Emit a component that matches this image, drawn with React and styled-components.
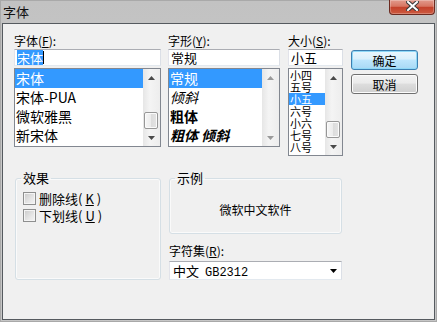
import React from 'react';
import styled, { createGlobalStyle } from 'styled-components';

const GlobalStyle = createGlobalStyle`
  html, body {
    margin: 0;
    padding: 0;
    background: #ffffff;
  }
  body {
    font-family: "Noto Sans CJK SC", "Liberation Sans", sans-serif;
    font-size: 12px;
    color: #000;
  }
`;

const Window = styled.div`
  width: 437px;
  height: 322px;
  box-sizing: border-box;
  display: flex;
  flex-direction: column;
  padding: 0 2px 2px 2px;
  background: linear-gradient(180deg, #c2c2c2 0%, #cbcbcb 60%, #c6c6c6 100%);
  box-shadow: inset 0 0 0 1px #a9a9a9;
`;

const TitleBar = styled.div`
  height: 23px;
  flex: none;
  display: flex;
  align-items: flex-start;
`;

const Title = styled.div`
  padding: 4px 0 0 1px;
  font-size: 13px;
  line-height: 15px;
  color: #111;
`;

const CloseButton = styled.div`
  margin-left: auto;
  width: 46px;
  height: 15px;
  box-sizing: border-box;
  border: 1px solid #6b2a20;
  border-top: none;
  border-radius: 0 0 4px 4px;
  display: flex;
  align-items: flex-start;
  justify-content: center;
  padding-top: 1px;
  background: linear-gradient(180deg, #e29a8c 0%, #d77562 45%, #c4412b 52%, #cc5a40 100%);
  box-shadow: inset 0 0 0 1px rgba(255, 255, 255, 0.25);
`;

const Body = styled.div`
  flex: 1;
  border: 1px solid #555a5f;
  background: #f0f0f0;
  padding: 9px 0 0 11px;
  display: flex;
  flex-direction: column;
`;

const TopRow = styled.div`
  display: flex;
  align-items: flex-start;
`;

const Column = styled.div`
  width: ${(p) => p.$width}px;
  margin-right: ${(p) => p.$gap}px;
  display: flex;
  flex-direction: column;
  flex: none;
`;

const Label = styled.div`
  height: 16px;
  line-height: 16px;
  font-size: 12px;
  white-space: nowrap;
`;

const TextBox = styled.div`
  height: 17px;
  box-sizing: border-box;
  border: 1px solid;
  border-color: #abadb3 #dbdfe6 #e3e9ef #e2e3ea;
  background: #fff;
  margin-bottom: 2px;
  padding-left: 2px;
  font-size: 13px;
  line-height: 15px;
  white-space: nowrap;
  overflow: hidden;
  display: flex;
  align-items: center;
`;

const Highlight = styled.span`
  background: #3399ff;
  color: #fff;
`;

const Caret = styled.span`
  display: inline-block;
  width: 1px;
  height: 13px;
  background: #000;
`;

const ListBox = styled.div`
  height: ${(p) => p.$height}px;
  box-sizing: border-box;
  border: 1px solid #828790;
  background: #fff;
  display: flex;
`;

const Items = styled.div`
  flex: 1;
  overflow: hidden;
  display: flex;
  flex-direction: column;
`;

const Item = styled.div`
  height: ${(p) => p.$row}px;
  line-height: ${(p) => p.$row}px;
  flex: none;
  font-size: ${(p) => p.$font}px;
  padding-left: 1px;
  white-space: nowrap;
  overflow: hidden;
  font-style: ${(p) => (p.$italic ? 'italic' : 'normal')};
  font-weight: ${(p) => (p.$bold ? 700 : 400)};
  background: ${(p) => (p.$selected ? '#3399ff' : 'transparent')};
  color: ${(p) => (p.$selected ? '#fff' : '#000')};
`;

const ScrollBar = styled.div`
  width: 17px;
  flex: none;
  display: flex;
  flex-direction: column;
  background: linear-gradient(90deg, #e6e6e6 0%, #f4f4f4 40%, #ededed 100%);
`;

const ArrowButton = styled.div`
  height: 17px;
  flex: none;
  display: flex;
  align-items: center;
  justify-content: center;
`;

const Track = styled.div`
  flex: 1;
  display: flex;
  flex-direction: column;
  justify-content: flex-end;
`;

const Thumb = styled.div`
  height: 17px;
  margin: 0 2px 0 1px;
  box-sizing: border-box;
  border: 1px solid #979797;
  border-radius: 2px;
  background: linear-gradient(90deg, #f6f6f6 0%, #ececec 50%, #dcdcdc 51%, #e4e4e4 100%);
  box-shadow: inset 0 0 0 1px #fbfbfb;
`;

const ButtonColumn = styled.div`
  width: 67px;
  padding-top: 17px;
  display: flex;
  flex-direction: column;
  gap: 4px;
`;

const Button = styled.div`
  height: 20px;
  box-sizing: border-box;
  border: 1px solid ${(p) => (p.$default ? '#3c7fb1' : '#707070')};
  border-radius: 3px;
  display: flex;
  align-items: center;
  justify-content: center;
  font-size: 12px;
  background: ${(p) =>
    p.$default
      ? 'linear-gradient(180deg, #eaf6fd 0%, #d9f0fc 45%, #bee6fd 50%, #a7d9f5 100%)'
      : 'linear-gradient(180deg, #f2f2f2 0%, #ebebeb 45%, #dddddd 50%, #cfcfcf 100%)'};
  box-shadow: inset 0 0 0 1px ${(p) => (p.$default ? '#8fd8f7' : '#fcfcfc')};
`;

const BottomRow = styled.div`
  margin-top: 16px;
  display: flex;
  align-items: flex-start;
`;

const Group = styled.fieldset`
  margin: 0 0 0 ${(p) => p.$left}px;
  width: ${(p) => p.$width}px;
  height: ${(p) => p.$height}px;
  box-sizing: border-box;
  padding: 0;
  border: 1px solid #d5dfe5;
  border-radius: 3px;
  box-shadow: inset 0 0 0 1px #fafafa;
  min-inline-size: 0;
`;

const Legend = styled.legend`
  margin-left: 5px;
  padding: 0 2px;
  font-size: 13px;
  line-height: 12px;
`;

const CheckList = styled.div`
  padding: 8px 0 0 7px;
  display: flex;
  flex-direction: column;
  gap: 4px;
`;

const CheckRow = styled.label`
  display: flex;
  align-items: center;
  gap: 3px;
  height: 13px;
  font-size: 13px;
  line-height: 13px;
`;

const CheckBox = styled.span`
  width: 13px;
  height: 13px;
  box-sizing: border-box;
  border: 1px solid #8e8f8f;
  background: linear-gradient(135deg, #c9c9c9 0%, #e6e6e6 60%, #f5f5f5 100%);
  box-shadow: inset 0 0 0 1px #f4f4f4;
  flex: none;
`;

const RightColumn = styled.div`
  margin-left: 8px;
  width: 173px;
  display: flex;
  flex-direction: column;
`;

const Sample = styled.div`
  height: 46px;
  display: flex;
  align-items: center;
  justify-content: center;
  font-size: 12px;
  padding-top: 2px;
`;

const CharsetLabel = styled(Label)`
  margin-top: 9px;
  margin-bottom: 2px;
`;

const ComboBox = styled.div`
  height: 19px;
  box-sizing: border-box;
  border: 1px solid;
  border-color: #abadb3 #dbdfe6 #e3e9ef #e2e3ea;
  background: #fff;
  display: flex;
  align-items: center;
  padding: 0 4px 0 3px;
  font-size: 13px;
`;

const ComboText = styled.span`
  flex: 1;
  white-space: nowrap;
`;

const Mono = styled.span`
  font-family: "Liberation Mono", monospace;
  font-size: 12px;
  margin-left: 6px;
`;

const Arrow = ({ up, colour = '#4a4a4a' }) => (
  <svg width="7" height="4" viewBox="0 0 7 4">
    <polygon points={up ? '0,4 3.5,0 7,4' : '0,0 7,0 3.5,4'} fill={colour} />
  </svg>
);

const Scroll = ({ thumb, disabled }) => {
  const colour = disabled ? '#9a9a9a' : '#4a4a4a';
  return (
    <ScrollBar>
      <ArrowButton>
        <Arrow up colour={colour} />
      </ArrowButton>
      <Track>{thumb && <Thumb />}</Track>
      <ArrowButton>
        <Arrow colour={colour} />
      </ArrowButton>
    </ScrollBar>
  );
};

const fonts = [
  { text: '宋体', selected: true },
  { text: '宋体-PUA' },
  { text: '微软雅黑' },
  { text: '新宋体' },
];

const styles = [
  { text: '常规', selected: true },
  { text: '倾斜', italic: true },
  { text: '粗体', bold: true },
  { text: '粗体 倾斜', bold: true, italic: true },
];

const sizes = ['小四', '五号', '小五', '六号', '小六', '七号', '八号'];

export default function App() {
  return (
    <>
      <GlobalStyle />
      <Window>
        <TitleBar>
          <Title>字体</Title>
          <CloseButton>
            <svg width="13" height="10" viewBox="0 0 13 10">
              <path d="M2 1 L11 9 M11 1 L2 9" stroke="#3b3b3b" strokeWidth="4" strokeLinecap="square" />
              <path d="M2 1 L11 9 M11 1 L2 9" stroke="#ffffff" strokeWidth="2" strokeLinecap="square" />
            </svg>
          </CloseButton>
        </TitleBar>
        <Body>
          <TopRow>
            <Column $width={147} $gap={7}>
              <Label>
                字体(<u>F</u>):
              </Label>
              <TextBox>
                <Highlight>宋体</Highlight>
                <Caret />
              </TextBox>
              <ListBox $height={79}>
                <Items>
                  {fonts.map((f) => (
                    <Item key={f.text} $row={19} $font={14} $selected={f.selected}>
                      {f.text}
                    </Item>
                  ))}
                </Items>
                <Scroll thumb />
              </ListBox>
            </Column>
            <Column $width={112} $gap={8}>
              <Label>
                字形(<u>Y</u>):
              </Label>
              <TextBox>常规</TextBox>
              <ListBox $height={79}>
                <Items>
                  {styles.map((s) => (
                    <Item
                      key={s.text}
                      $row={19}
                      $font={14}
                      $selected={s.selected}
                      $italic={s.italic}
                      $bold={s.bold}
                    >
                      {s.text}
                    </Item>
                  ))}
                </Items>
                <Scroll disabled />
              </ListBox>
            </Column>
            <Column $width={55} $gap={8}>
              <Label>
                大小(<u>S</u>):
              </Label>
              <TextBox>小五</TextBox>
              <ListBox $height={88}>
                <Items>
                  {sizes.map((s, i) => (
                    <Item key={s} $row={12} $font={11} $selected={i === 2}>
                      {s}
                    </Item>
                  ))}
                </Items>
                <Scroll thumb />
              </ListBox>
            </Column>
            <ButtonColumn>
              <Button $default>确定</Button>
              <Button>取消</Button>
            </ButtonColumn>
          </TopRow>
          <BottomRow>
            <Group $left={1} $width={146} $height={108}>
              <Legend>效果</Legend>
              <CheckList>
                <CheckRow>
                  <CheckBox />
                  删除线(<u>K</u>)
                </CheckRow>
                <CheckRow>
                  <CheckBox />
                  下划线(<u>U</u>)
                </CheckRow>
              </CheckList>
            </Group>
            <RightColumn>
              <Group $left={0} $width={173} $height={62}>
                <Legend>示例</Legend>
                <Sample>微软中文软件</Sample>
              </Group>
              <CharsetLabel>
                字符集(<u>R</u>):
              </CharsetLabel>
              <ComboBox>
                <ComboText>
                  中文<Mono>GB2312</Mono>
                </ComboText>
                <Arrow colour="#000" />
              </ComboBox>
            </RightColumn>
          </BottomRow>
        </Body>
      </Window>
    </>
  );
}
